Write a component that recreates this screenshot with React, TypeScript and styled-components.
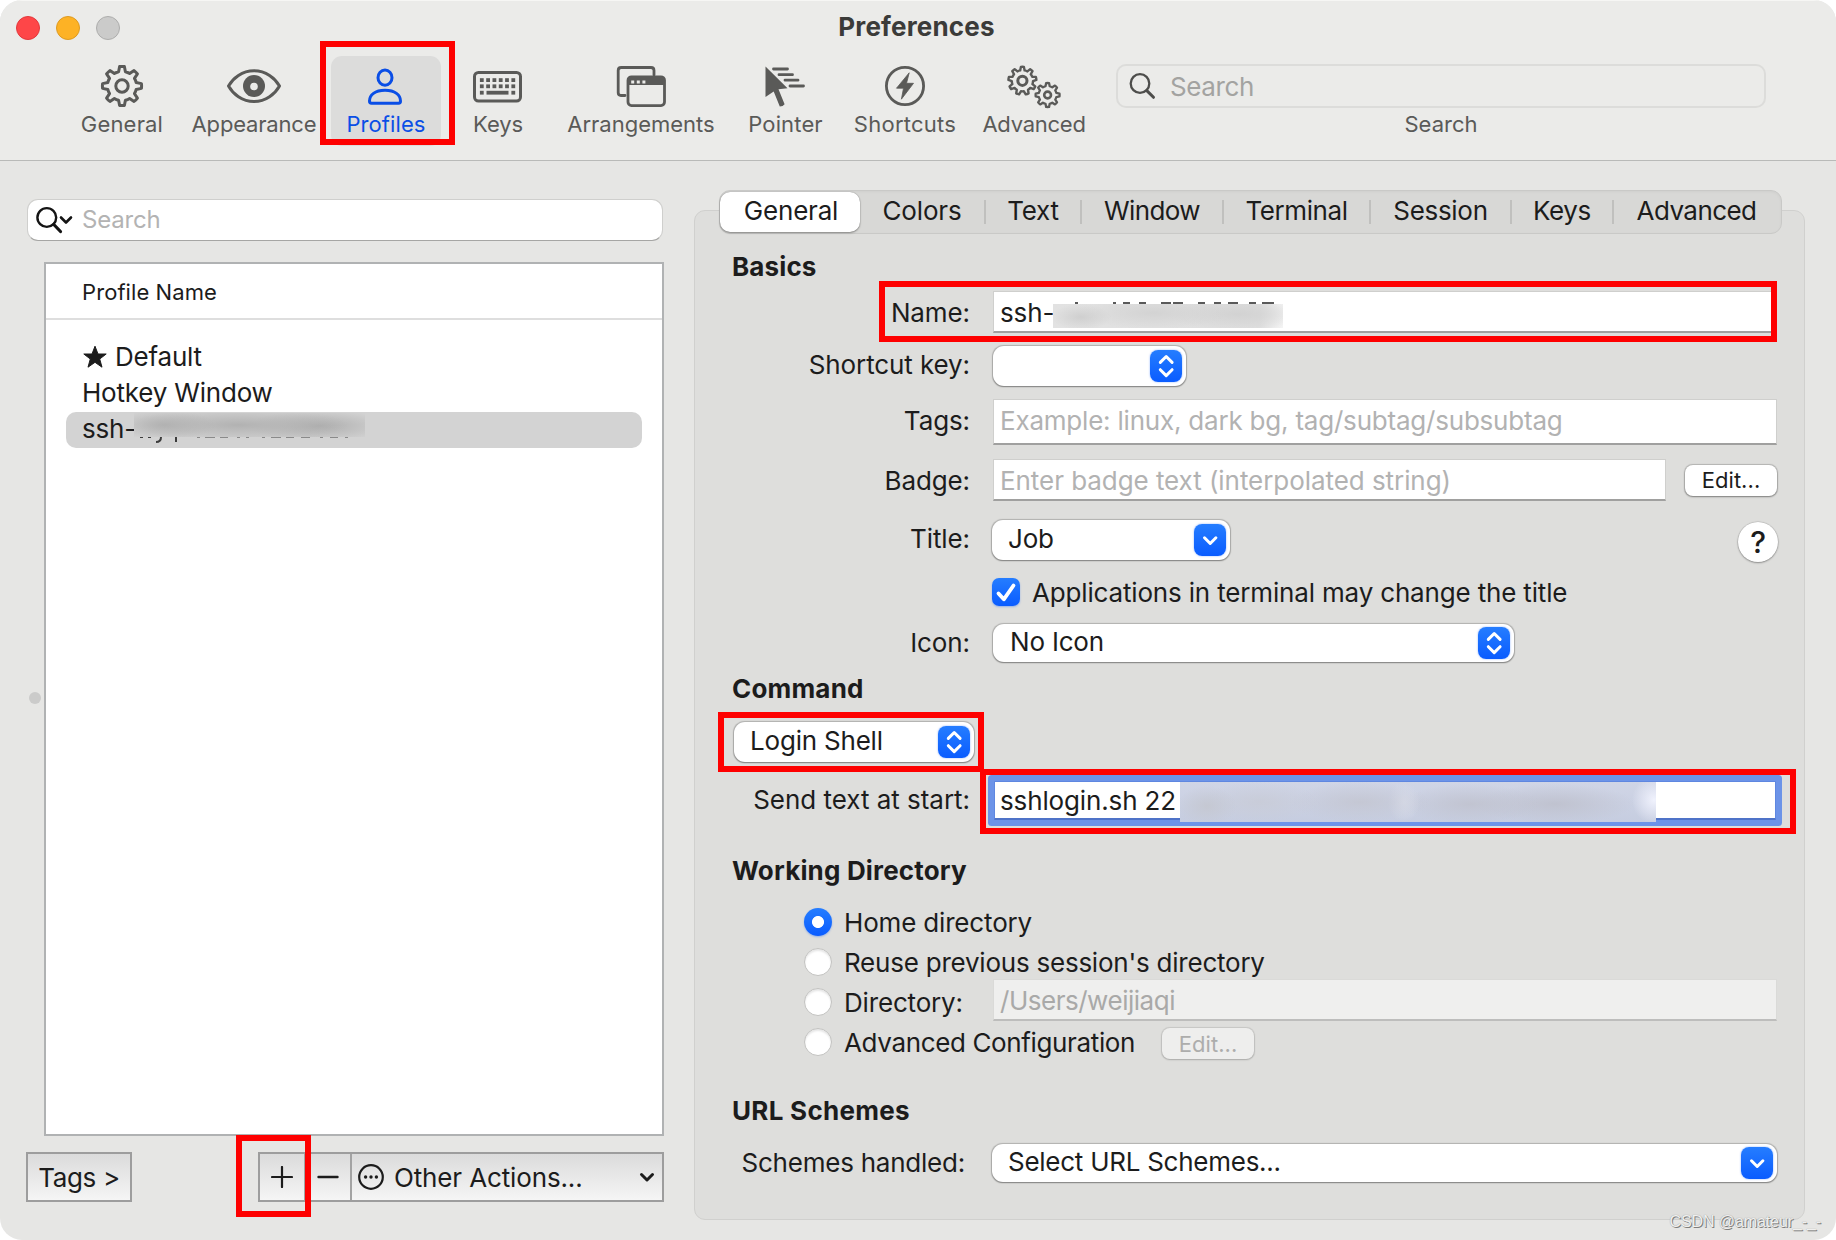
import React from "react";
import styled, { createGlobalStyle, css } from "styled-components";

const GlobalStyle = createGlobalStyle`
  *, *::before, *::after { box-sizing: border-box; }
  html, body { margin: 0; padding: 0; background: #fff; }
  body {
    font-family: Inter, "Liberation Sans", sans-serif;
    font-size: 26px;
    line-height: 32px;
    letter-spacing: -0.2px;
    color: #1c1c1c;
    white-space: nowrap;
    overflow: hidden;
  }
`;

const Window = styled.div`
  position: relative;
  display: flex;
  flex-direction: column;
  width: 1836px;
  height: 1240px;
  border-radius: 22px;
  background: #e6e6e4;
  overflow: hidden;
`;

/* ---------- header ---------- */

const Header = styled.header`
  display: flex;
  flex-direction: column;
  height: 161px;
  background: #ebebe9;
  border-top: 1px solid #f6f6f4;
  border-bottom: 1px solid #b9bab8;
`;

const TitleBar = styled.div`
  display: grid;
  grid-template-columns: 1fr auto 1fr;
  align-items: center;
  height: 55px;
  padding: 0 19px 1px 16px;
`;

const Lights = styled.div`
  display: flex;
  gap: 16px;
`;

const Light = styled.span<{ $fill: string; $edge: string }>`
  width: 24px;
  height: 24px;
  border-radius: 50%;
  background: ${(p) => p.$fill};
  border: 1px solid ${(p) => p.$edge};
`;

const WindowTitle = styled.h1`
  margin: 0;
  padding-bottom: 2px;
  font-size: 26px;
  font-weight: 700;
  letter-spacing: 0.17px;
  line-height: 32px;
  color: #3b3b39;
`;

const Toolbar = styled.nav`
  display: flex;
  padding-left: 78px;
`;

const ToolItem = styled.div<{ $width: number; $gap?: number; $active?: boolean; $ls?: number }>`
  display: flex;
  flex-direction: column;
  align-items: center;
  width: ${(p) => p.$width}px;
  height: 90px;
  margin-left: ${(p) => p.$gap ?? 0}px;
  border-radius: 11px;
  font-size: 22px;
  line-height: 28px;
  letter-spacing: ${(p) => p.$ls ?? 0}px;
  color: #5a5a58;
  ${(p) =>
    p.$active &&
    css`
      background: #dcdcdb;
      color: #0a4ee6;
    `}
`;

const ToolIcon = styled.svg`
  width: 60px;
  height: 50px;
  margin: 5px 0 0;
  overflow: visible;
`;

const ToolLabel = styled.span`
  margin-top: -1px;
`;

const HeaderSearch = styled.div`
  display: flex;
  align-items: center;
  align-self: stretch;
  height: 44px;
  margin: 8px 0 3px;
  padding-left: 10px;
  gap: 14px;
  border: 2px solid #dcdcda;
  border-radius: 10px;
  font-size: 26px;
  letter-spacing: -0.38px;
  color: #a3a3a1;
  & > span { padding-top: 2px; }
`;

/* ---------- body ---------- */

const Body = styled.main`
  display: flex;
  flex: 1;
`;

const Splitter = styled.span`
  align-self: center;
  width: 12px;
  height: 12px;
  margin: 39px 4px 0 29px;
  border-radius: 50%;
  background: #cbcbca;
`;

const Left = styled.section`
  display: grid;
  grid-template-columns: 45px 619px;
  grid-template-rows: 42px 875px 50px;
  padding-top: 38px;
  width: 694px;
`;

const ProfileSearch = styled.div`
  grid-column: 1 / -1;
  display: flex;
  align-items: center;
  gap: 8px;
  width: 636px;
  margin-left: 27px;
  padding-left: 8px;
  border-radius: 11px;
  background: #fff;
  border: 1px solid #cfcfcd;
  border-bottom-color: #a6a6a4;
  font-size: 24px;
  color: #b3b3b3;
`;

const List = styled.div`
  margin-top: 21px;
  width: 620px;
  margin-left: -1px;
  height: 874px;
  border: 2px solid #b0b2b3;
  background: #fff;
`;

const ListHeader = styled.div`
  height: 56px;
  padding: 0 0 2px 36px;
  border-bottom: 2px solid #dedede;
  font-size: 22px;
  line-height: 56px;
  letter-spacing: 0.08px;
`;

const Rows = styled.div`
  padding: 20px 20px 0;
`;

const Row = styled.div<{ $selected?: boolean }>`
  display: flex;
  align-items: center;
  gap: 7px;
  height: 36px;
  padding: 0 0 3px 16px;
  border-radius: 10px;
  background: ${(p) => (p.$selected ? "#d3d3d3" : "transparent")};
`;

const Bottom = styled.div`
  grid-column: 1 / -1;
  display: flex;
  margin-top: 36px;
  padding-left: 26px;
`;

const bezel = css`
  display: flex;
  align-items: center;
  height: 50px;
  border: 2px solid #9d9d9d;
  background: linear-gradient(#dbdbdb, #f5f5f5);
`;

const TagsButton = styled.div`
  ${bezel}
  width: 106px;
  justify-content: center;
  padding-top: 2px;
  letter-spacing: -0.37px;
`;

const Actions = styled.div`
  ${bezel}
  width: 406px;
  margin-left: 126px;
`;

const Segment = styled.div<{ $width?: number }>`
  display: flex;
  align-items: center;
  justify-content: ${(p) => (p.$width ? "center" : "flex-start")};
  width: ${(p) => (p.$width ? `${p.$width}px` : "auto")};
  flex: ${(p) => (p.$width ? "none" : 1)};
  height: 100%;
  padding: ${(p) => (p.$width ? 0 : "0 7px 0 6px")};
  border-right: ${(p) => (p.$width ? "2px solid #a3a3a3" : "none")};
  & > span { flex: 1; padding: 2px 0 0 10px; letter-spacing: -0.14px; }
`;

/* ---------- right pane ---------- */

const Right = styled.section`
  display: flex;
  flex-direction: column;
  width: 1111px;
  padding-top: 29px;
`;

const Tabs = styled.div`
  position: relative;
  z-index: 1;
  display: flex;
  width: 1063px;
  height: 44px;
  margin-left: 25px;
  padding: 0;
  border: 1px solid #c9c9c7;
  border-radius: 11px;
  background: #d8d8d6;
  box-shadow: inset 0 1px 3px rgba(0, 0, 0, 0.04);
`;

const Tab = styled.div<{ $width: number; $divider?: boolean; $active?: boolean; $ls: number }>`
  display: flex;
  align-items: center;
  justify-content: center;
  width: ${(p) => p.$width}px;
  height: 42px;
  padding: 0 2px 2px 0;
  letter-spacing: ${(p) => p.$ls}px;
  background: ${(p) =>
    p.$divider ? "linear-gradient(#c0c0be, #c0c0be) right 9px / 2px 24px no-repeat" : "none"};
  ${(p) =>
    p.$active &&
    css`
      height: 40px;
      padding: 0 0 2px 2px;
      margin-top: 1px;
      background: #fff;
      border-radius: 10px;
      box-shadow: 0 0 1px rgba(0, 0, 0, 0.4), 0 1px 2px rgba(0, 0, 0, 0.35);
    `}
`;

const Panel = styled.div`
  display: flex;
  flex-direction: column;
  height: 1010px;
  margin-top: -24px;
  padding: 40px 27px 0 24px;
  border: 1px solid #d0d0ce;
  border-radius: 11px;
  background: #dededc;
`;

const Heading = styled.h2<{ $top: number; $ls: number }>`
  margin: ${(p) => p.$top}px 0 0 13px;
  height: 31px;
  font-size: 26px;
  line-height: 31px;
  font-weight: 700;
  letter-spacing: ${(p) => p.$ls}px;
`;

const FormRow = styled.div<{ $height: number; $top: number }>`
  display: grid;
  grid-template-columns: 251px 1fr;
  grid-template-rows: 100%;
  column-gap: 22px;
  align-items: center;
  height: ${(p) => p.$height}px;
  margin-top: ${(p) => p.$top}px;
`;

const Label = styled.label<{ $lift?: number; $ls?: number; $inset?: number }>`
  text-align: right;
  padding-top: ${(p) => (p.$lift === undefined ? 2 : 0)}px;
  padding-bottom: ${(p) => p.$lift ?? 0}px;
  padding-right: ${(p) => p.$inset ?? 0}px;
  letter-spacing: ${(p) => p.$ls ?? -0.1}px;
`;

const Control = styled.div<{ $indent?: number }>`
  display: flex;
  align-items: center;
  height: 100%;
  gap: 19px;
  padding-left: ${(p) => p.$indent ?? 1}px;
`;

const Field = styled.div<{ $tone?: "muted" | "disabled"; $ls?: number; $focus?: boolean; $lift?: number }>`
  display: flex;
  align-items: center;
  flex: 1;
  height: 100%;
  padding: ${(p) => (p.$lift === undefined ? 2 : 0)}px 0 ${(p) => p.$lift ?? 0}px 6px;
  letter-spacing: ${(p) => p.$ls ?? -0.14}px;
  border: 1px solid #cfcfcd;
  border-bottom: 2px solid #a0a09f;
  background: #fff;
  color: ${(p) => (p.$tone === "muted" ? "#b2b2b2" : "#1c1c1c")};
  ${(p) =>
    p.$tone === "disabled" &&
    css`
      background: #efefee;
      color: #a9a9a8;
      border-color: #dadad8;
      border-bottom-color: #bdbdbc;
    `}
  ${(p) =>
    p.$focus &&
    css`
      margin-right: 1px;
      padding-left: 5px;
      border-color: #5f87e0;
      border-bottom-color: #4f73c8;
      box-shadow: 0 0 0 6px #6c93e8;
      border-radius: 1px;
    `}
`;

const Popup = styled.div<{ $width?: number; $ls?: number; $inset?: number; $lift?: number }>`
  display: flex;
  align-items: center;
  justify-content: space-between;
  width: ${(p) => (p.$width ? `${p.$width}px` : "auto")};
  flex: ${(p) => (p.$width ? "none" : 1)};
  height: 100%;
  padding: 0 4px 0 ${(p) => p.$inset ?? 16}px;
  border-radius: 11px;
  background: #fff;
  letter-spacing: ${(p) => p.$ls ?? -0.2}px;
  box-shadow: 0 0 1px 0.5px rgba(0, 0, 0, 0.2), 0 1px 1.5px rgba(0, 0, 0, 0.28);
  & > span { padding-bottom: ${(p) => p.$lift ?? 3}px; }
`;

const Arrow = styled.svg`
  flex: none;
  width: 32px;
  height: 32px;
  border-radius: 8px;
  background: linear-gradient(#257dff, #0a5cff);
  box-shadow: 0 0 2px rgba(10, 92, 255, 0.5);
  fill: none;
  stroke: #fff;
  stroke-width: 3;
  stroke-linecap: round;
  stroke-linejoin: round;
`;

const SmallButton = styled.div<{ $disabled?: boolean }>`
  display: flex;
  align-items: center;
  justify-content: center;
  width: 92px;
  height: 31px;
  border-radius: 8px;
  font-size: 22px;
  letter-spacing: 0.05px;
  background: ${(p) => (p.$disabled ? "#eeeeed" : "#fff")};
  color: ${(p) => (p.$disabled ? "#adadac" : "#1c1c1c")};
  box-shadow: 0 0 1px 0.5px rgba(0, 0, 0, ${(p) => (p.$disabled ? 0.1 : 0.18)}),
    0 1px 2px rgba(0, 0, 0, ${(p) => (p.$disabled ? 0.15 : 0.3)});
`;

const HelpButton = styled.div`
  display: flex;
  align-items: center;
  justify-content: center;
  width: 40px;
  height: 40px;
  margin: 4px -1px 0 auto;
  border-radius: 50%;
  background: #fff;
  font-size: 30px;
  font-weight: 500;
  box-shadow: 0 0 1px 0.5px rgba(0, 0, 0, 0.18), 0 1px 2px rgba(0, 0, 0, 0.3);
`;

const Checkbox = styled.svg`
  width: 28px;
  height: 28px;
  border-radius: 7px;
  background: linear-gradient(#257dff, #0a5cff);
  box-shadow: 0 1px 2px rgba(10, 92, 255, 0.35);
`;

const CheckLabel = styled.span`
  margin-left: -7px;
  padding-top: 2px;
  letter-spacing: -0.165px;
`;

const RadioGroup = styled.div`
  margin: 16px 0 0 85px;
`;

const RadioRow = styled.div`
  display: flex;
  align-items: center;
  height: 40px;
`;

const Radio = styled.span<{ $on?: boolean }>`
  flex: none;
  width: 28px;
  height: 28px;
  border-radius: 50%;
  border: 1px solid #c2c2c0;
  background: #fff;
  box-shadow: inset 0 2px 2px rgba(0, 0, 0, 0.1);
  ${(p) =>
    p.$on &&
    css`
      border: none;
      background: radial-gradient(circle, #fff 5.6px, transparent 6.4px),
        linear-gradient(#257dff, #0a5cff);
      box-shadow: 0 1px 2px rgba(10, 92, 255, 0.35);
    `}
`;

const RadioLabel = styled.span<{ $width?: number; $ls: number }>`
  width: ${(p) => (p.$width ? `${p.$width}px` : "auto")};
  margin-left: 12px;
  padding-top: 2px;
  letter-spacing: ${(p) => p.$ls}px;
`;

const DirectoryField = styled.div`
  display: flex;
  flex: 1;
  height: 42px;
  margin-bottom: 4px;
`;

const AdvancedEdit = styled.div`
  margin: 3px 0 0 27px;
`;

/* ---------- overlays ---------- */

const Highlight = styled.div<{ $x: number; $y: number; $w: number; $h: number }>`
  position: absolute;
  z-index: 5;
  left: ${(p) => p.$x}px;
  top: ${(p) => p.$y}px;
  width: ${(p) => p.$w}px;
  height: ${(p) => p.$h}px;
  border: 6px solid #fe0000;
`;

const smudgeTones = {
  list: css`
    left: 134px; top: 413px; width: 231px; height: 24px;
    background:
      radial-gradient(ellipse 52px 15px at 30px 12px, rgba(172, 172, 172, 0.8), transparent),
      radial-gradient(ellipse 110px 17px at 105px 12px, rgba(176, 176, 176, 0.95), transparent),
      radial-gradient(ellipse 70px 16px at 185px 13px, rgba(172, 172, 172, 0.95), transparent),
      #d2d2d2;
  `,
  name: css`
    left: 1053px; top: 304px; width: 230px; height: 24px;
    background:
      radial-gradient(ellipse 30px 13px at 28px 13px, #cfcfcf, transparent),
      radial-gradient(ellipse 75px 16px at 100px 9px, #d3d3d3, transparent),
      radial-gradient(ellipse 70px 16px at 185px 10px, #d2d2d2, transparent),
      linear-gradient(90deg, #e2e2e2, #dedede 90%, #f4f4f4);
  `,
  command: css`
    left: 1180px; top: 782px; width: 476px; height: 40px;
    background:
      radial-gradient(ellipse 30px 20px at 27px 24px, #c5c8d2, transparent),
      radial-gradient(ellipse 60px 20px at 80px 20px, rgba(200, 203, 214, 0.8), transparent),
      radial-gradient(ellipse 70px 20px at 180px 20px, rgba(195, 197, 208, 0.8), transparent),
      radial-gradient(ellipse 16px 20px at 224px 20px, #dadeeb, transparent),
      radial-gradient(ellipse 70px 20px at 290px 22px, rgba(192, 194, 206, 0.85), transparent),
      radial-gradient(ellipse 80px 20px at 375px 22px, rgba(190, 192, 204, 0.85), transparent),
      radial-gradient(ellipse 22px 24px at 474px 18px, #f0f2fd, transparent),
      linear-gradient(#d0d5e6, #c6cde0);
  `,
};

const Smudge = styled.div<{ $kind: keyof typeof smudgeTones }>`
  position: absolute;
  z-index: 4;
  ${(p) => smudgeTones[p.$kind]}
`;

const Fragments = styled.svg<{ $x: number; $y: number }>`
  position: absolute;
  z-index: 3;
  left: ${(p) => p.$x}px;
  top: ${(p) => p.$y}px;
  width: 232px;
  height: 8px;
  fill: none;
  stroke-width: 2;
`;

const Watermark = styled.div`
  position: absolute;
  right: 15px;
  bottom: 8px;
  font-family: "Liberation Sans", Arial, sans-serif;
  font-size: 16px;
  line-height: 20px;
  letter-spacing: -0.1px;
  color: #f0f0ef;
  text-shadow: 1px 1px 0 #7e7e7d, 0 0 1px #8a8a89;
`;

/* ---------- drawings ---------- */

function gearPath(cx: number, cy: number, outer: number, root: number, teeth = 8) {
  const step = (Math.PI * 2) / teeth;
  const at = (r: number, a: number) =>
    `${(cx + r * Math.sin(a)).toFixed(2)} ${(cy - r * Math.cos(a)).toFixed(2)}`;
  let d = "";
  for (let i = 0; i < teeth; i++) {
    const a = i * step;
    d += `${i ? "L" : "M"}${at(root, a - step * 0.3)}L${at(outer, a - step * 0.155)}`;
    d += `A${outer} ${outer} 0 0 1 ${at(outer, a + step * 0.155)}L${at(root, a + step * 0.3)}`;
    d += `A${root} ${root} 0 0 1 ${at(root, a + step * 0.7)}`;
  }
  return d + "Z";
}

const stroke = { fill: "none", stroke: "currentColor", strokeLinejoin: "round", strokeLinecap: "round" } as const;

const GearIcon = () => (
  <ToolIcon viewBox="0 0 60 50">
    <path d={gearPath(30, 25, 19.6, 14.6)} {...stroke} strokeWidth={3} />
    <circle cx="30" cy="25" r="6.2" {...stroke} strokeWidth={3} />
  </ToolIcon>
);

const EyeIcon = () => (
  <ToolIcon viewBox="0 0 60 50">
    <path d="M4.500 25C9 17 18 9.800 30 9.800S51 17 55.500 25C51 33 42 40.500 30 40.500S9 33 4.500 25Z" {...stroke} strokeWidth={3} />
    <circle cx="30" cy="25" r="11" fill="currentColor" />
    <circle cx="30" cy="25.500" r="3.800" fill="#ebebe9" />
  </ToolIcon>
);

const PersonIcon = () => (
  <ToolIcon viewBox="1 0 60 50">
    <ellipse cx="30" cy="16.700" rx="7" ry="7.600" {...stroke} strokeWidth={3} />
    <path d="M14.500 40C14.500 34 20 29.300 30 29.300S45.500 34 45.500 40Q45.500 42.300 43.500 42.300H16.500Q14.500 42.300 14.500 40Z" {...stroke} strokeWidth={3} />
  </ToolIcon>
);

const KeyboardIcon = () => (
  <ToolIcon viewBox="0.500 0 60 50">
    <rect x="7" y="11.500" width="46" height="28.500" rx="4" {...stroke} strokeWidth={3} />
    {[17.2, 23.4].map((y) =>
      [0, 1, 2, 3, 4, 5].map((i) => (
        <rect key={`${y}-${i}`} x={12.4 + i * 6.3} y={y} width="3.800" height="3.800" fill="currentColor" />
      )),
    )}
    <rect x="12.400" y="29.800" width="3.800" height="3.800" fill="currentColor" />
    <rect x="19" y="29.800" width="22" height="3.800" fill="currentColor" />
    <rect x="43.900" y="29.800" width="3.800" height="3.800" fill="currentColor" />
  </ToolIcon>
);

const WindowsIcon = () => (
  <ToolIcon viewBox="0 0 60 50">
    <path d="M14 34.500H10Q7.200 34.500 7.200 31.500V9.500Q7.200 6.500 10.200 6.500H40Q43 6.500 43 9.500V14" {...stroke} strokeWidth={2.8} />
    <rect x="17" y="15.800" width="36.500" height="28.800" rx="3.500" {...stroke} strokeWidth={2.8} />
    <path d="M17 24V19Q17 15.500 20.500 15.500H50Q53.500 15.500 53.500 19V24Z" fill="currentColor" />
    <path d="M20.200 19.500h3v3h-3zM25.800 19.500h3v3h-3zM31.400 19.500h3v3h-3z" fill="#ebebe9" />
  </ToolIcon>
);

const PointerIcon = () => (
  <ToolIcon viewBox="0 0 60 50">
    <path d="M9.500 5.500L31.500 27.300L22.500 28.200L28.600 43.200Q27 45.600 23.800 45.600L17.700 30.500L9.500 36Z" fill="currentColor" />
    <path d="M17.500 8H31.500M23 13.700H36.500M29 19.200H42M34 25H47.500" {...stroke} strokeWidth={2.8} />
  </ToolIcon>
);

const BoltIcon = () => (
  <ToolIcon viewBox="0 0 60 50">
    <circle cx="30" cy="25" r="18.600" {...stroke} strokeWidth={2.8} />
    <path d="M34.200 11.800L21.500 27.200H28.500L26.400 38.200L38.500 22.300H31.500Z" fill="currentColor" stroke="currentColor" strokeWidth="0.800" strokeLinejoin="round" />
  </ToolIcon>
);

const GearsIcon = () => (
  <ToolIcon viewBox="0 0 60 50">
    <path d={gearPath(18.4, 19.8, 14, 10.6, 9)} {...stroke} strokeWidth={2.4} />
    <circle cx="18.400" cy="19.800" r="4.600" {...stroke} strokeWidth={3} />
    <path d={gearPath(43.6, 34, 12, 9, 8)} {...stroke} strokeWidth={2.3} />
    <circle cx="43.600" cy="34" r="3.400" {...stroke} strokeWidth={2.6} />
  </ToolIcon>
);

const UpDown = () => (
  <Arrow viewBox="0 0 32 32"><path d="M10.300 12.400L16.200 6.500L22.100 12.400M10.300 19.700L16.200 25.600L22.100 19.700" /></Arrow>
);

const Down = () => (
  <Arrow viewBox="0 0 32 32"><path d="M10.500 13.800L16.200 19.500L21.900 13.800" /></Arrow>
);

const tools = [
  { label: "General", icon: <GearIcon />, w: 88, gap: 0, ls: 0.18 },
  { label: "Appearance", icon: <EyeIcon />, w: 132, gap: 22, ls: -0.17 },
  { label: "Profiles", icon: <PersonIcon />, w: 110, gap: 11, ls: 0.1, active: true },
  { label: "Keys", icon: <KeyboardIcon />, w: 80, gap: 17, ls: -0.12 },
  { label: "Arrangements", icon: <WindowsIcon />, w: 156, gap: 25, ls: 0 },
  { label: "Pointer", icon: <PointerIcon />, w: 83, gap: 25, ls: 0.15 },
  { label: "Shortcuts", icon: <BoltIcon />, w: 108, gap: 24, ls: 0.25 },
  { label: "Advanced", icon: <GearsIcon />, w: 108, gap: 21, ls: -0.25 },
];

const tabs = [
  { label: "General", w: 140, ls: -0.21, active: true },
  { label: "Colors", w: 126, ls: -0.15, divider: true },
  { label: "Text", w: 96, ls: -0.3, divider: true },
  { label: "Window", w: 142, ls: -0.6, divider: true },
  { label: "Terminal", w: 147, ls: -0.4, divider: true },
  { label: "Session", w: 141, ls: -0.3, divider: true },
  { label: "Keys", w: 102, ls: -0.4, divider: true },
  { label: "Advanced", w: 167, ls: -0.55 },
];

export default function App() {
  return (
    <Window>
      <GlobalStyle />
      <Header>
        <TitleBar>
          <Lights>
            <Light $fill="#fe4648" $edge="#e2383c" />
            <Light $fill="#fdb225" $edge="#dd9a22" />
            <Light $fill="#cbcbca" $edge="#adadac" />
          </Lights>
          <WindowTitle>Preferences</WindowTitle>
        </TitleBar>
        <Toolbar>
          {tools.map((t) => (
            <ToolItem key={t.label} $width={t.w} $gap={t.gap} $active={t.active} $ls={t.ls}>
              {t.icon}
              <ToolLabel>{t.label}</ToolLabel>
            </ToolItem>
          ))}
          <ToolItem $width={650} $gap={28}>
            <HeaderSearch>
              <svg width="28" height="28" viewBox="0 0 28 28" fill="none" stroke="#4d4d4b" strokeLinecap="round">
                <circle cx="12" cy="11.500" r="9.300" strokeWidth="2.300" />
                <path d="M18.800 18.600L25.500 25.300" strokeWidth="3" />
              </svg>
              <span>Search</span>
            </HeaderSearch>
            <ToolLabel>Search</ToolLabel>
          </ToolItem>
        </Toolbar>
      </Header>

      <Body>
        <Left>
          <ProfileSearch>
            <svg width="38" height="28" viewBox="0 0 38 28" fill="none" stroke="#141414" strokeLinecap="round" strokeLinejoin="round">
              <circle cx="10.800" cy="11.500" r="9.400" strokeWidth="2.400" />
              <path d="M17.800 18.500L24.500 25.500" strokeWidth="3.200" />
              <path d="M25 11.500L30 16.500L35 11.500" strokeWidth="2.600" />
            </svg>
            Search
          </ProfileSearch>
          <Splitter />
          <List>
            <ListHeader>Profile Name</ListHeader>
            <Rows>
              <Row>
                <svg width="26" height="26" viewBox="0 0 26 26" fill="#1c1c1c">
                  <path d="M13 2.200L16 10H24.200L17.700 15L20 23.200L13 18.300L6 23.200L8.300 15L1.800 10H10Z" stroke="#1c1c1c" strokeWidth="1" strokeLinejoin="round" />
                </svg>
                Default
              </Row>
              <Row>Hotkey Window</Row>
              <Row $selected>ssh-</Row>
            </Rows>
          </List>
          <Bottom>
            <TagsButton>Tags &gt;</TagsButton>
            <Actions>
              <Segment $width={46}>
                <svg width="22" height="22" viewBox="0 0 22 22" stroke="#1c1c1c" strokeWidth="2.200" strokeLinecap="round"><path d="M11 1V21M1 11H21" /></svg>
              </Segment>
              <Segment $width={46}>
                <svg width="22" height="22" viewBox="0 0 22 22" stroke="#1c1c1c" strokeWidth="2.400" strokeLinecap="round"><path d="M1.500 11H20.500" /></svg>
              </Segment>
              <Segment>
                <svg width="26" height="26" viewBox="0 0 26 26" fill="#1c1c1c">
                  <circle cx="13" cy="13" r="11.800" fill="none" stroke="#1c1c1c" strokeWidth="2.200" />
                  <circle cx="7.600" cy="13" r="1.700" /><circle cx="13" cy="13" r="1.700" /><circle cx="18.400" cy="13" r="1.700" />
                </svg>
                <span>Other Actions...</span>
                <svg width="16" height="12" viewBox="0 0 16 12" fill="none" stroke="#1c1c1c" strokeWidth="3" strokeLinecap="round" strokeLinejoin="round"><path d="M2.500 3.500L8 9L13.500 3.500" /></svg>
              </Segment>
            </Actions>
          </Bottom>
        </Left>

        <Right>
          <Tabs>
            {tabs.map((t) => (
              <Tab key={t.label} $width={t.w} $ls={t.ls} $active={t.active} $divider={t.divider}>{t.label}</Tab>
            ))}
          </Tabs>
          <Panel>
            <Heading $top={0} $ls={0.12}>Basics</Heading>
            <FormRow $height={42} $top={9}>
              <Label>Name:</Label>
              <Control><Field>ssh-</Field></Control>
            </FormRow>
            <FormRow $height={40} $top={13}>
              <Label $lift={3}>Shortcut key:</Label>
              <Control><Popup $width={193}><span /><UpDown /></Popup></Control>
            </FormRow>
            <FormRow $height={46} $top={13}>
              <Label $lift={2}>Tags:</Label>
              <Control><Field $tone="muted" $ls={-0.21} $lift={1}>Example: linux, dark bg, tag/subtag/subsubtag</Field></Control>
            </FormRow>
            <FormRow $height={42} $top={14}>
              <Label>Badge:</Label>
              <Control>
                <Field $tone="muted" $ls={-0.06}>Enter badge text (interpolated string)</Field>
                <SmallButton>Edit...</SmallButton>
              </Control>
            </FormRow>
            <FormRow $height={40} $top={19}>
              <Label $lift={3}>Title:</Label>
              <Control $indent={0}>
                <Popup $width={238}><span>Job</span><Down /></Popup>
                <HelpButton>?</HelpButton>
              </Control>
            </FormRow>
            <FormRow $height={28} $top={18}>
              <span />
              <Control $indent={0}>
                <Checkbox viewBox="0 0 28 28"><path d="M6.500 15.500L11.800 21.300L21.500 7.500" fill="none" stroke="#fff" strokeWidth="3.800" strokeLinecap="round" strokeLinejoin="round" /></Checkbox>
                <CheckLabel>Applications in terminal may change the title</CheckLabel>
              </Control>
            </FormRow>
            <FormRow $height={38} $top={18}>
              <Label $lift={1}>Icon:</Label>
              <Control><Popup $width={521} $inset={17} $lift={2}><span>No Icon</span><UpDown /></Popup></Control>
            </FormRow>
            <Heading $top={11} $ls={0.18}>Command</Heading>
            <FormRow $height={40} $top={18}>
              <Control $indent={15}><Popup $width={240}><span>Login Shell</span><UpDown /></Popup></Control>
            </FormRow>
            <FormRow $height={39} $top={19}>
              <Label $ls={-0.03} $lift={1}>Send text at start:</Label>
              <Control $indent={2}><Field $focus>sshlogin.sh 22</Field></Control>
            </FormRow>
            <Heading $top={35} $ls={0.17}>Working Directory</Heading>
            <RadioGroup>
              <RadioRow><Radio $on /><RadioLabel $ls={-0.17}>Home directory</RadioLabel></RadioRow>
              <RadioRow><Radio /><RadioLabel $ls={-0.23}>Reuse previous session's directory</RadioLabel></RadioRow>
              <RadioRow>
                <Radio />
                <RadioLabel $width={149} $ls={-0.17}>Directory:</RadioLabel>
                <DirectoryField><Field $tone="disabled" $ls={-0.48}>/Users/weijiaqi</Field></DirectoryField>
              </RadioRow>
              <RadioRow>
                <Radio />
                <RadioLabel $ls={-0.36}>Advanced Configuration</RadioLabel>
                <AdvancedEdit><SmallButton $disabled>Edit...</SmallButton></AdvancedEdit>
              </RadioRow>
            </RadioGroup>
            <Heading $top={33} $ls={0.28}>URL Schemes</Heading>
            <FormRow $height={38} $top={18}>
              <Label $lift={1} $ls={-0.23} $inset={5}>Schemes handled:</Label>
              <Control $indent={0}><Popup $ls={-0.26} $lift={2}><span>Select URL Schemes...</span><Down /></Popup></Control>
            </FormRow>
          </Panel>
        </Right>
      </Body>

      <Fragments $x={134} $y={436} viewBox="0 0 232 8">
        <path d="M6 1h3M14 1h3M27 1q0 5-5 5M42 1v5" stroke="#3c3c3c" />
        <path d="M63 1h3M71 1h10M86 1h8M103 1h3M112 1h3M128 1h3M137 1h10M152 1h8M167 1h9M186 1h3M196 1h8M211 1h3" stroke="#8a8a8a" />
      </Fragments>
      <Fragments $x={1053} $y={302} viewBox="0 0 232 8">
        <path d="M22 1h3M60 1h3M70 1h7M86 1h7M108 1h10M120 1h10M145 1h7M161 1h7M175 1h10M196 1h7M209 1h12" stroke="#5a5a5a" />
      </Fragments>
      <Smudge $kind="list" />
      <Smudge $kind="name" />
      <Smudge $kind="command" />

      <Highlight $x={320} $y={41} $w={135} $h={104} />
      <Highlight $x={879} $y={281} $w={898} $h={61} />
      <Highlight $x={718} $y={712} $w={266} $h={60} />
      <Highlight $x={980} $y={769} $w={816} $h={65} />
      <Highlight $x={236} $y={1135} $w={75} $h={82} />
      <Watermark>CSDN @amateur_-_-</Watermark>
    </Window>
  );
}
